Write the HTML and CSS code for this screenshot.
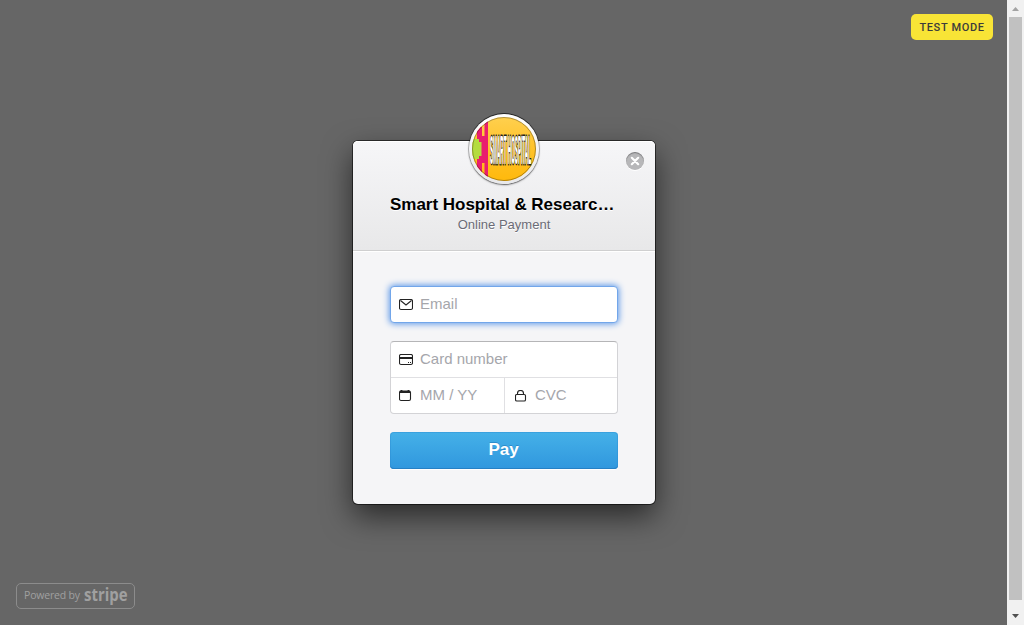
FILE: index.html
```html
<!DOCTYPE html>
<html lang="en">
<head>
<meta charset="utf-8">
<title>Online Payment</title>
<link rel="stylesheet" href="styles.css">
</head>
<body>
<main class="overlay">
  <span class="test-mode">TEST MODE</span>
  <form class="checkout">
    <header class="header">
      <div class="logo">
        <svg viewBox="0 0 64 64" width="64" height="64">
          <defs>
            <clipPath id="disc"><circle cx="32" cy="32" r="32"/></clipPath>
            <linearGradient id="gold" x1="0" y1="0" x2="0" y2="1"><stop offset="0" stop-color="#ffd04e"/><stop offset=".5" stop-color="#ffc22a"/><stop offset="1" stop-color="#ffb90c"/></linearGradient>
          </defs>
          <g clip-path="url(#disc)">
            <rect width="64" height="64" fill="url(#gold)"/>
            <path fill="#e91e6e" d="M5 18v-8h5v9h2.500V0H16v64h-3.500V46H10v9H5v-8z"/>
            <path fill="#b4dc3f" d="M0 22h7v3h2.500v14H7v3H0z"/>
          </g>
          <g class="logo-text" transform="translate(18 46.500) scale(1 4.100)">
            <text textLength="41" lengthAdjust="spacingAndGlyphs">SMART HOSPITAL</text>
          </g>
          <circle cx="32" cy="32" r="31.5" fill="none" stroke="#000" stroke-opacity=".3"/>
        </svg>
      </div>
      <button class="close" type="button" aria-label="Close">
        <svg viewBox="0 0 18 18" width="18" height="18"><path d="M5.8 5.8l6.4 6.4M12.2 5.8l-6.4 6.4" stroke="#fff" stroke-width="2.2" stroke-linecap="round"/></svg>
      </button>
      <h1 class="title">Smart Hospital &amp; Researc…</h1>
      <h2 class="subtitle">Online Payment</h2>
    </header>
    <div class="body">
      <label class="field email">
        <svg class="icon" viewBox="0 0 14 12" width="14" height="12"><rect x=".5" y=".5" width="13" height="10" rx="1.5"/><path d="M1.5 1.5L7 6l5.500-4.500"/></svg>
        <span>Email</span>
      </label>
      <div class="card">
        <label class="field number">
          <svg class="icon" viewBox="0 0 14 12" width="14" height="12"><rect x=".5" y=".5" width="13" height="10" rx="1.500"/><path d="M0 4h14" stroke-width="2"/><path d="M9 8.500h1M11 8.500h1"/></svg>
          <span>Card number</span>
        </label>
        <label class="field expiry">
          <svg class="icon" viewBox="0 0 14 12" width="14" height="12"><rect x=".5" y="1" width="11" height="9.500" rx="1.500"/><path d="M1 2h10M2.500 0v2M9.500 0v2" stroke-width="1.800"/></svg>
          <span>MM / YY</span>
        </label>
        <label class="field cvc">
          <svg class="icon" viewBox="0 0 14 12" width="14" height="12"><rect x=".5" y="4.500" width="10" height="6.500" rx="1.300"/><path d="M2.500 4.500v-1a3 3 0 0 1 6 0v1"/></svg>
          <span>CVC</span>
        </label>
      </div>
      <button class="pay" type="button">Pay</button>
    </div>
  </form>
  <div class="powered">
    <svg viewBox="0 0 105 24" width="105" height="24">
      <text class="by" x="0" y="15" textLength="56">Powered by</text>
      <text class="stripe" x="60" y="17" textLength="43.500" lengthAdjust="spacingAndGlyphs">stripe</text>
    </svg>
  </div>
</main>
<aside class="scrollbar">
  <svg viewBox="0 0 7 4" width="7" height="4"><path d="M0 4l3.500-4L7 4z" fill="#a3a3a3"/></svg>
  <div class="thumb"></div>
  <svg viewBox="0 0 7 4" width="7" height="4"><path d="M0 0l3.500 4L7 0z" fill="#505050"/></svg>
</aside>
</body>
</html>
```
FILE: styles.css
```css
* { box-sizing: border-box; }
body {
  margin: 0;
  height: 625px;
  display: flex;
  overflow: hidden;
  background: #666;
  font-family: "Liberation Sans", Arial, sans-serif;
}
.overlay {
  flex: 1;
  display: flex;
  flex-direction: column;
  align-items: center;
  padding: 14px 14px 16px 15px;
  background: #666;
}
.test-mode {
  align-self: flex-end;
  width: 82px;
  height: 26px;
  border-radius: 5px;
  background: #f8e436;
  color: #3c3b3c;
  font: 500 11px/27px Roboto, sans-serif;
  letter-spacing: .65px;
  text-align: center;
}
.checkout {
  width: 302px;
  height: 363px;
  margin: 101px 0 0;
  border-radius: 5px;
  background: #f5f5f7;
  box-shadow: 0 0 0 1px rgba(0, 0, 0, .55), 0 12px 30px rgba(0, 0, 0, .6);
}
.header {
  position: relative;
  height: 110px;
  padding: 53px 37px 0;
  border-bottom: 1px solid #cfcfd0;
  border-radius: 5px 5px 0 0;
  background: linear-gradient(#f6f6f8, #e8e8e9);
  box-shadow: inset 0 1px #fff, 0 1px #fff;
  text-align: center;
}
.logo {
  position: absolute;
  left: 116px;
  top: -27px;
  width: 70px;
  height: 70px;
  padding: 3px;
  border-radius: 50%;
  background: linear-gradient(#fff, #e8e8ea);
  box-shadow: 0 0 0 1px rgba(0, 0, 0, .2), 0 -1px 0 rgba(0, 0, 0, .5), 0 1px 2px rgba(0, 0, 0, .5);
}
.logo svg { display: block; }
.logo-text {
  font: bold 10px "Liberation Sans", sans-serif;
  fill: #fff;
  stroke: #222;
  stroke-width: .7px;
  paint-order: stroke;
}
.close {
  position: absolute;
  right: 11px;
  top: 11px;
  width: 18px;
  height: 18px;
  padding: 0;
  border: 0;
  border-radius: 50%;
  background: #b7b7b9;
  box-shadow: inset 0 1px 1px rgba(0, 0, 0, .35), 0 1px #fff;
}
.close svg { display: block; }
.title {
  margin: 0;
  font-size: 17px;
  line-height: 21px;
  letter-spacing: -.02px;
  white-space: nowrap;
  color: #000;
  text-shadow: 0 1px #fff;
  text-align: left;
}
.subtitle {
  margin: 0;
  font-size: 13px;
  font-weight: normal;
  line-height: 19px;
  color: #6b6b76;
  text-shadow: 0 1px #fff;
}
.body { padding: 35px 37px; }
.field {
  display: flex;
  align-items: center;
  gap: 7px;
  height: 36px;
  padding: 0 0 2px 8px;
  font-size: 15px;
  line-height: 20px;
  color: #a5a6ab;
}
.icon {
  margin-top: 2px;
  fill: none;
  stroke: #222;
  stroke-width: 1.1;
}
.email {
  height: 37px;
  border: 1px solid #72a6ea;
  border-radius: 4px;
  background: #fff;
  box-shadow: 0 0 6px 1px #5d98e8;
}
.card {
  display: grid;
  grid-template-columns: 114px 1fr;
  height: 73px;
  margin: 18px 0;
  border: 1px solid #d3d3d6;
  border-top-color: #b5b5b7;
  border-radius: 4px;
  background: #fff;
}
.number { grid-column: 1 / 3; border-bottom: 1px solid #e0e0e3; }
.expiry { border-right: 1px solid #e0e0e3; height: 35px; }
.cvc { height: 35px; padding-left: 10px; gap: 6px; }
.pay {
  display: block;
  width: 228px;
  height: 37px;
  padding: 0 1px 2px 0;
  border: 0;
  border-radius: 4px;
  background: linear-gradient(#45b1e8, #3097de);
  box-shadow: inset 0 0 0 1px rgba(40, 135, 205, .35), inset 0 -1px #267dc1, 0 1px #fff;
  color: #fff;
  font: bold 17px "Liberation Sans", sans-serif;
  text-shadow: 0 -1px rgba(0, 70, 140, .3);
}
.powered {
  align-self: flex-start;
  width: 119px;
  height: 26px;
  margin: auto 0 0 1px;
  padding: 0 7px;
  border: 1px solid #8c8c8c;
  border-radius: 5px;
}
.powered svg { display: block; fill: #a0a0a0; overflow: visible; }
.by { font: 10.5px "Open Sans", sans-serif; }
.stripe { font: bold 17.5px "Open Sans", sans-serif; }
.scrollbar {
  width: 17px;
  display: flex;
  flex-direction: column;
  align-items: center;
  justify-content: space-between;
  padding: 7px 0;
  background: #f1f1f1;
}
.thumb {
  width: 13px;
  height: 583px;
  margin-bottom: 8px;
  background: #c1c1c1;
}
```
